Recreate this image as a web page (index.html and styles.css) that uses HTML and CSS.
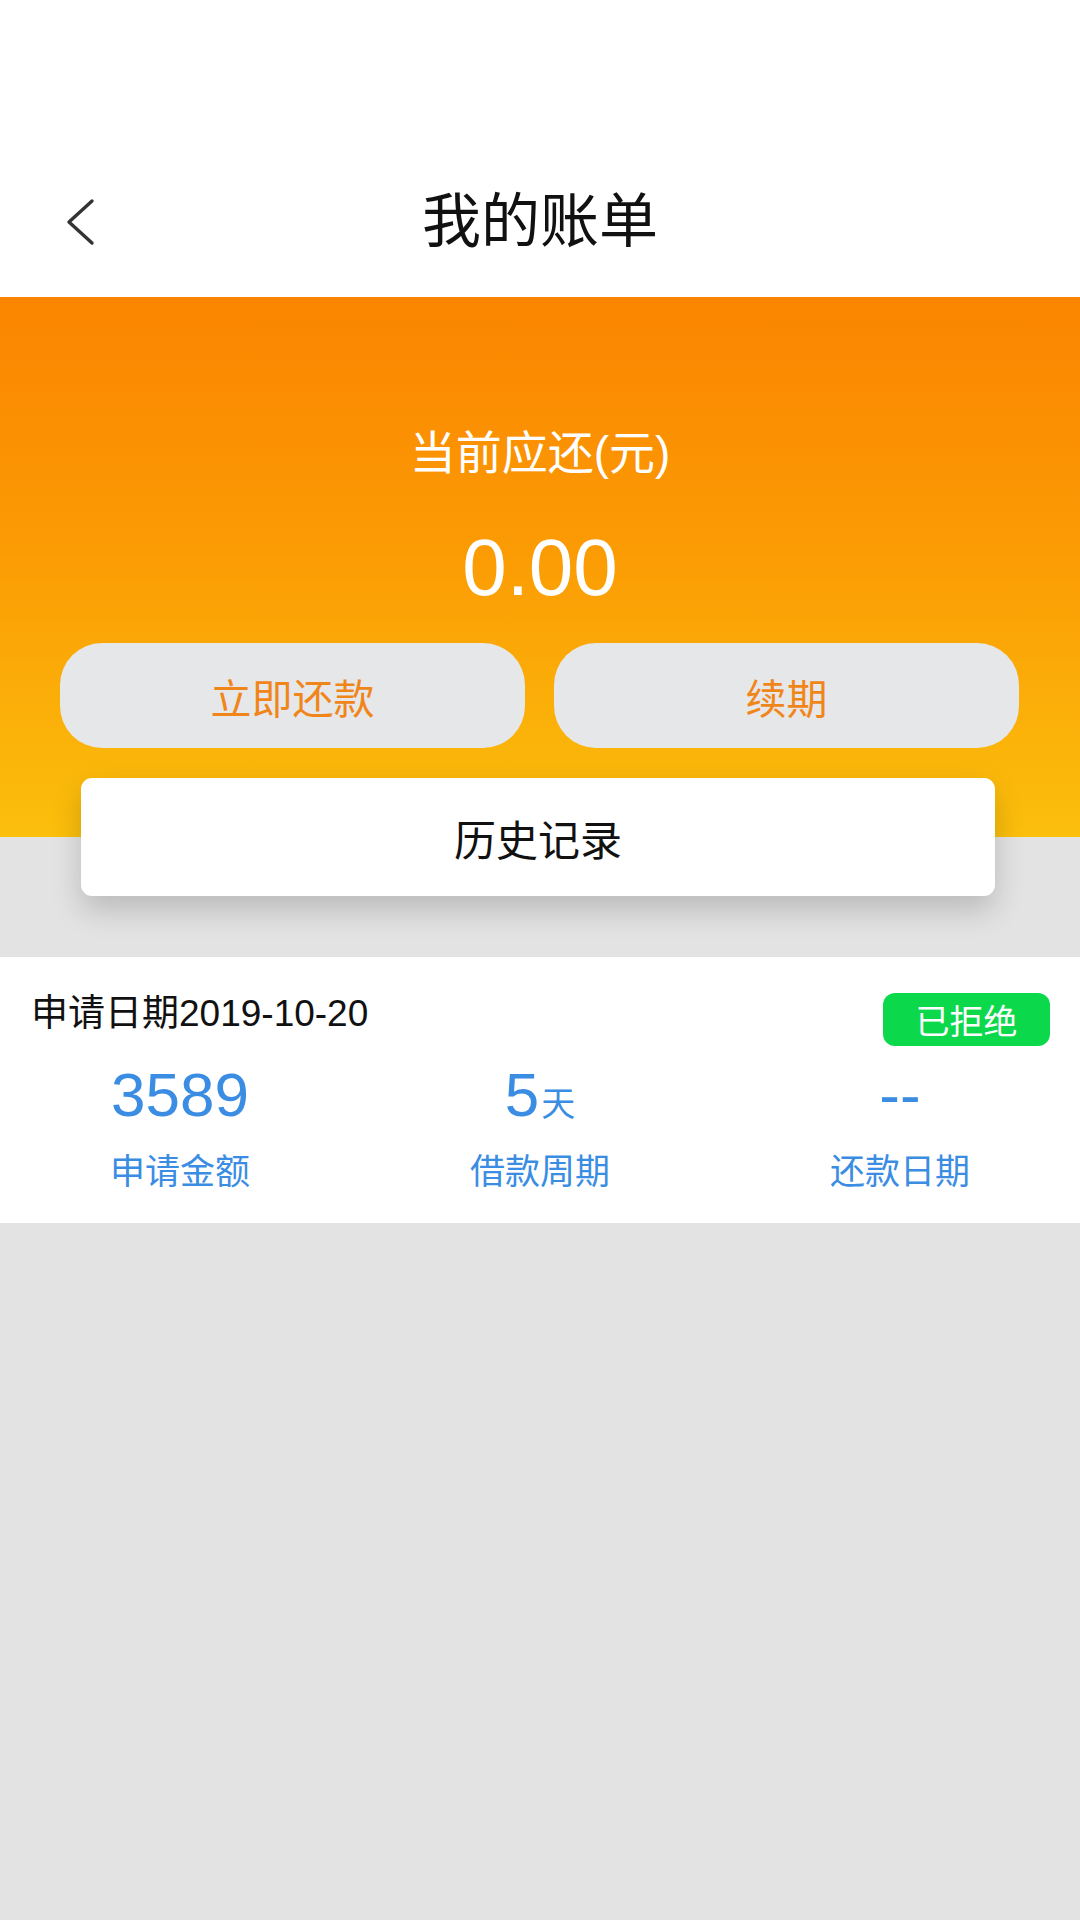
FILE: index.html
```html
<!DOCTYPE html>
<html lang="zh-CN">
<head>
<meta charset="utf-8">
<title>我的账单</title>
<link rel="stylesheet" href="styles.css">
</head>
<body>
<div class="page">
  <header class="nav">
    <div class="nav-bar">
      <div class="nav-left">
        <svg class="back" width="30" height="50" viewBox="0 0 30 50">
          <polyline points="26,4 3,25 26,46" fill="none" stroke="#333" stroke-width="3.4" stroke-linecap="round" stroke-linejoin="round"/>
        </svg>
      </div>
      <h1 class="title">我的账单</h1>
      <div class="nav-right"></div>
    </div>
  </header>

  <section class="hero">
    <div class="hero-label">当前应还(元)</div>
    <div class="hero-amount">0.00</div>
    <div class="hero-actions">
      <div class="pill">立即还款</div>
      <div class="pill">续期</div>
    </div>
  </section>

  <div class="history">历史记录</div>

  <section class="record">
    <div class="record-head">
      <div class="record-date">申请日期2019-10-20</div>
      <div class="badge">已拒绝</div>
    </div>
    <div class="record-stats">
      <div class="stat">
        <div class="stat-value">3589</div>
        <div class="stat-label">申请金额</div>
      </div>
      <div class="stat">
        <div class="stat-value">5<span class="unit">天</span></div>
        <div class="stat-label">借款周期</div>
      </div>
      <div class="stat">
        <div class="stat-value">--</div>
        <div class="stat-label">还款日期</div>
      </div>
    </div>
  </section>
</div>
</body>
</html>
```

FILE: styles.css
```css
* { box-sizing: border-box; }
html, body {
  margin: 0;
  padding: 0;
}
body {
  background: #e3e3e3;
  font-family: "Liberation Sans", "Noto Sans CJK SC", sans-serif;
  width: 1080px;
  min-height: 1920px;
}
.page {
  display: flex;
  flex-direction: column;
}

.nav {
  background: #ffffff;
  height: 297px;
  display: flex;
  flex-direction: column;
  justify-content: flex-end;
}
.nav-bar {
  height: 150px;
  display: grid;
  grid-template-columns: 1fr auto 1fr;
  align-items: center;
}
.nav-left {
  padding-left: 66px;
  display: flex;
  align-items: center;
}
.back { display: block; }
.title {
  margin: 0;
  font-size: 59px;
  font-weight: 400;
  line-height: 70px;
  color: #111;
}

.hero {
  background: linear-gradient(180deg, #fb8500 0%, #fb9a04 45%, #fbbf0c 100%);
  height: 540px;
  padding-top: 126px;
  display: flex;
  flex-direction: column;
  align-items: center;
}
.hero-label {
  color: #fff;
  font-size: 46px;
  line-height: 60px;
  height: 60px;
}
.hero-amount {
  margin-top: 35px;
  color: #fff;
  font-size: 80px;
  line-height: 100px;
  height: 100px;
  font-weight: 400;
}
.hero-actions {
  margin-top: 25px;
  width: 100%;
  padding: 0 61px 0 60px;
  display: flex;
  gap: 29px;
}
.pill {
  flex: 1;
  height: 105px;
  border-radius: 42px;
  background: #e6e7e9;
  color: #f0861a;
  font-size: 41px;
  display: flex;
  align-items: center;
  justify-content: center;
}

.history {
  margin: -59px 85px 0 81px;
  height: 118px;
  background: #fff;
  border-radius: 11px;
  box-shadow: 0 14px 30px rgba(0, 0, 0, 0.18);
  display: flex;
  align-items: center;
  justify-content: center;
  font-size: 42px;
  color: #111;
  position: relative;
}

.record {
  margin-top: 61px;
  background: #fff;
  height: 266px;
  padding: 36px 30px 0 31px;
}
.record-head {
  display: flex;
  justify-content: space-between;
  align-items: flex-start;
}
.record-date {
  font-size: 37px;
  line-height: 42px;
  height: 42px;
  color: #111;
}
.badge {
  width: 167px;
  height: 53px;
  border-radius: 12px;
  background: #0cd84b;
  color: #fff;
  font-size: 34px;
  display: flex;
  align-items: center;
  justify-content: center;
}
.record-stats {
  margin: 14px -30px 0 -31px;
  display: grid;
  grid-template-columns: repeat(3, 1fr);
}
.stat {
  display: flex;
  flex-direction: column;
  align-items: center;
  color: #3a8de2;
}
.stat-value {
  font-size: 62px;
  line-height: 70px;
  height: 70px;
}
.unit {
  font-size: 34px;
  line-height: 0;
  margin-left: 2px;
}
.stat-label {
  margin-top: 20px;
  font-size: 35px;
  line-height: 44px;
  height: 44px;
}
```
